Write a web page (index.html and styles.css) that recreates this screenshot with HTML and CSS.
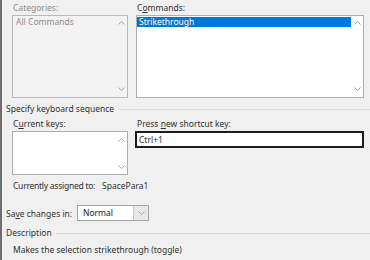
FILE: index.html
```html
<!DOCTYPE html>
<html>
<head>
  <meta charset="UTF-8">
  <title>Customize Keyboard</title>
  <link rel="stylesheet" href="styles.css">
</head>
<body>
  <div class="dialog">
    <div class="columns">
      <div class="field">
        <div class="label disabled">Categories:</div>
        <div class="listbox tall disabled">
          <div class="items">
            <div class="item">All Commands</div>
          </div>
          <div class="scroll">
            <svg width="7" height="4" viewBox="0 0 7 4"><polyline points="0.5,3.5 3.5,0.5 6.5,3.5"/></svg>
            <svg width="7" height="4" viewBox="0 0 7 4"><polyline points="0.5,0.5 3.5,3.5 6.5,0.5"/></svg>
          </div>
        </div>
      </div>
      <div class="field">
        <div class="label">C<u>o</u>mmands:</div>
        <div class="listbox tall">
          <div class="items">
            <div class="item selected">Strikethrough</div>
          </div>
          <div class="scroll">
            <svg width="7" height="4" viewBox="0 0 7 4"><polyline points="0.5,3.5 3.5,0.5 6.5,3.5"/></svg>
            <svg width="7" height="4" viewBox="0 0 7 4"><polyline points="0.5,0.5 3.5,3.5 6.5,0.5"/></svg>
          </div>
        </div>
      </div>
    </div>

    <div class="group group-keys">Specify keyboard sequence</div>

    <div class="columns keys">
      <div class="field">
        <div class="label">C<u>u</u>rrent keys:</div>
        <div class="listbox short">
          <div class="items"></div>
          <div class="scroll">
            <svg width="7" height="4" viewBox="0 0 7 4"><polyline points="0.5,3.5 3.5,0.5 6.5,3.5"/></svg>
            <svg width="7" height="4" viewBox="0 0 7 4"><polyline points="0.5,0.5 3.5,3.5 6.5,0.5"/></svg>
          </div>
        </div>
      </div>
      <div class="field">
        <div class="label">Press <u>n</u>ew shortcut key:</div>
        <div class="textbox">Ctrl+1</div>
      </div>
    </div>

    <div class="assigned">
      <span class="assigned-label">Currently assigned to:</span><span class="assigned-value">SpacePara1</span>
    </div>

    <div class="save-row">
      <span class="save-label">Sa<u>v</u>e changes in:</span>
      <div class="select">
        <span class="select-value">Normal</span>
        <span class="select-button">
          <svg width="7" height="4" viewBox="0 0 7 4"><polyline points="0.5,0.5 3.5,3.5 6.5,0.5"/></svg>
        </span>
      </div>
    </div>

    <div class="group group-desc">Description</div>
    <div class="description">Makes the selection strikethrough (toggle)</div>
  </div>
</body>
</html>
```

FILE: styles.css
```css
* {
  box-sizing: border-box;
}

body {
  margin: 0;
  background-color: #f0f0f0;
  font-family: "Noto Sans", "DejaVu Sans", sans-serif;
  font-size: 8.5px;
  color: #303030;
  overflow: hidden;
}

.dialog {
  width: 370px;
  height: 260px;
  border-left: 2px solid #6e6e6e;
  padding: 2px 0 0 4px;
}

u {
  text-decoration-thickness: 1px;
  text-underline-offset: 1px;
}

.columns {
  display: grid;
  grid-template-columns: 116px 228px;
  column-gap: 8px;
  margin-left: 6px;
}

.label {
  height: 12px;
  line-height: 12px;
  margin-bottom: 1px;
  padding-left: 1px;
  white-space: nowrap;
}

.disabled {
  color: #8e8e8e;
}

.listbox {
  display: flex;
  border: 1px solid #adadad;
  background-color: #ffffff;
}

.listbox.disabled {
  background-color: #f3f3f3;
  border-color: #b9b9b9;
}

.listbox.tall {
  height: 83px;
}

.listbox.short {
  height: 44px;
}

.items {
  flex: 1;
  padding: 1px 1px 0 0;
}

.item {
  height: 10px;
  line-height: 10px;
  padding-left: 3px;
  white-space: nowrap;
}

.item.selected {
  background-color: #0078d7;
  color: #ffffff;
  padding-left: 2px;
}

.scroll {
  width: 11px;
  display: flex;
  flex-direction: column;
  justify-content: space-between;
  align-items: center;
  padding: 5px 0 6px;
}

.short .scroll {
  padding: 6px 0 5px;
}

svg polyline {
  fill: none;
  stroke: #a8a8a8;
  stroke-width: 1;
}

.group {
  display: flex;
  align-items: center;
  height: 12px;
  line-height: 12px;
  white-space: nowrap;
}

.group::after {
  content: "";
  flex: 1;
  height: 1px;
  margin-left: 4px;
  background-color: #dcdcdc;
}

.group-keys {
  margin-top: 5px;
}

.keys {
  margin-top: 3px;
}

.textbox {
  height: 17px;
  margin-left: -1px;
  border: 2px solid #1c1c1c;
  background-color: #ffffff;
  line-height: 13px;
  padding-left: 2px;
}

.assigned {
  display: flex;
  height: 12px;
  line-height: 12px;
  margin-top: 5px;
  padding-left: 7px;
  white-space: nowrap;
}

.assigned-label {
  flex: none;
  width: 89px;
  letter-spacing: -0.25px;
}

.save-row {
  display: flex;
  align-items: center;
  height: 16px;
  margin-top: 13px;
}

.save-label {
  width: 71px;
  flex: none;
}

.select {
  display: flex;
  height: 16px;
  border: 1px solid #a5a5a5;
  background-color: #ffffff;
}

.select-value {
  width: 55px;
  line-height: 14px;
  padding-left: 5px;
  color: #1a1a1a;
}

.select-button {
  width: 15px;
  display: flex;
  align-items: center;
  justify-content: center;
  border-left: 1px solid #c6c6c6;
  background-color: #e8e8e8;
}

.group-desc {
  margin-top: 6px;
}

.description {
  height: 12px;
  line-height: 12px;
  margin-top: 5px;
  padding-left: 7px;
}
```
